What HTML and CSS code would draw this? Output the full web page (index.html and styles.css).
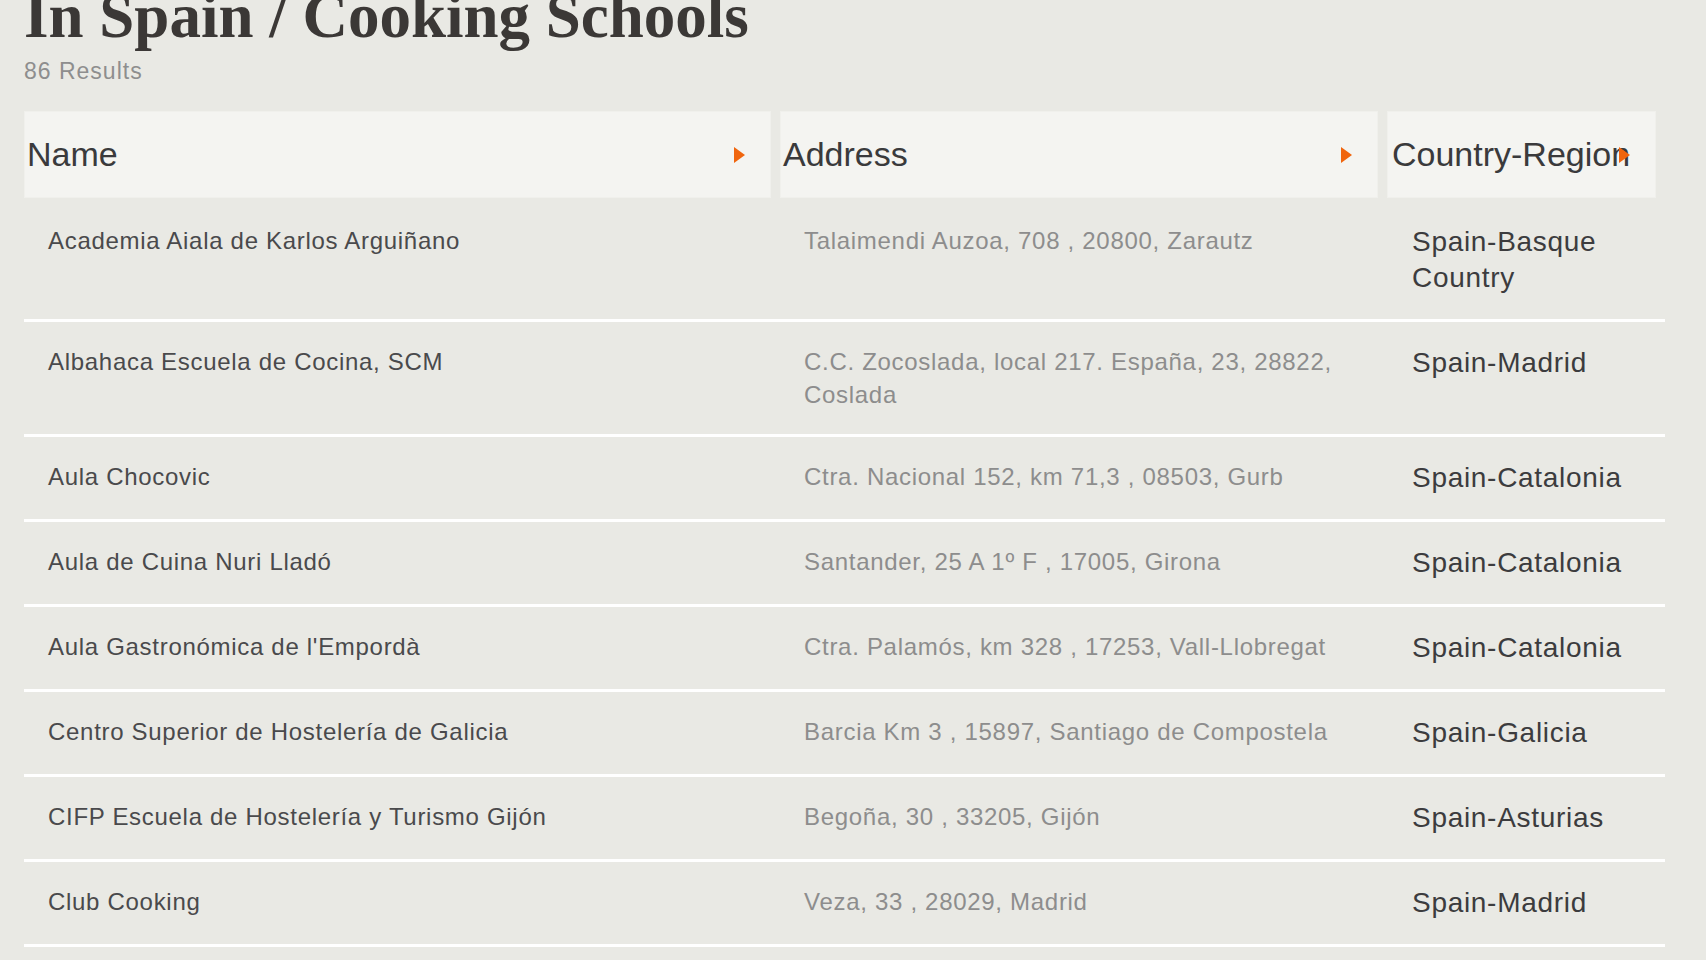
FILE: index.html
```html
<!DOCTYPE html>
<html lang="en">
<head>
<meta charset="utf-8">
<title>In Spain / Cooking Schools</title>
<link rel="stylesheet" href="styles.css">
</head>
<body>
<div class="page">
  <header class="page-head">
    <h1 class="title">In Spain / Cooking Schools</h1>
    <div class="count">86 Results</div>
  </header>
  <div class="list">
    <div class="row head-row">
      <div class="hcell">Name<span class="arrow"></span></div>
      <div class="hcell">Address<span class="arrow"></span></div>
      <div class="hcell">Country-Region<span class="arrow"></span></div>
    </div>
    <div class="row item">
      <div class="c-name">Academia Aiala de Karlos Arguiñano</div>
      <div class="c-addr">Talaimendi Auzoa, 708 , 20800, Zarautz</div>
      <div class="c-country">Spain-Basque Country</div>
    </div>
    <div class="row item">
      <div class="c-name">Albahaca Escuela de Cocina, SCM</div>
      <div class="c-addr">C.C. Zocoslada, local 217. España, 23, 28822, Coslada</div>
      <div class="c-country">Spain-Madrid</div>
    </div>
    <div class="row item">
      <div class="c-name">Aula Chocovic</div>
      <div class="c-addr">Ctra. Nacional 152, km 71,3 , 08503, Gurb</div>
      <div class="c-country">Spain-Catalonia</div>
    </div>
    <div class="row item">
      <div class="c-name">Aula de Cuina Nuri Lladó</div>
      <div class="c-addr">Santander, 25 A 1º F , 17005, Girona</div>
      <div class="c-country">Spain-Catalonia</div>
    </div>
    <div class="row item">
      <div class="c-name">Aula Gastronómica de l'Empordà</div>
      <div class="c-addr">Ctra. Palamós, km 328 , 17253, Vall-Llobregat</div>
      <div class="c-country">Spain-Catalonia</div>
    </div>
    <div class="row item">
      <div class="c-name">Centro Superior de Hostelería de Galicia</div>
      <div class="c-addr">Barcia Km 3 , 15897, Santiago de Compostela</div>
      <div class="c-country">Spain-Galicia</div>
    </div>
    <div class="row item">
      <div class="c-name">CIFP Escuela de Hostelería y Turismo Gijón</div>
      <div class="c-addr">Begoña, 30 , 33205, Gijón</div>
      <div class="c-country">Spain-Asturias</div>
    </div>
    <div class="row item">
      <div class="c-name">Club Cooking</div>
      <div class="c-addr">Veza, 33 , 28029, Madrid</div>
      <div class="c-country">Spain-Madrid</div>
    </div>
  </div>
</div>
</body>
</html>
```

FILE: styles.css
```css
html, body {
  margin: 0;
  padding: 0;
  background: #e9e9e4;
  overflow: hidden;
}

.page {
  padding-left: 24px;
  font-family: "Liberation Sans", Arial, sans-serif;
}

.page-head {
  margin-top: -15px;
}

.title {
  margin: 0;
  font-family: "Liberation Serif", "Times New Roman", serif;
  font-weight: bold;
  font-size: 63px;
  line-height: 62px;
  color: #3b3836;
  white-space: nowrap;
}

.count {
  margin-top: 11px;
  font-size: 23px;
  line-height: 26px;
  letter-spacing: 1px;
  color: #8e8e8e;
}

.list {
  margin-top: 27px;
  width: 1641px;
}

.row {
  display: grid;
  grid-template-columns: 747px 598px 269px;
  column-gap: 9px;
}

.head-row {
  margin-bottom: 3px;
}

.hcell {
  position: relative;
  height: 87px;
  display: flex;
  align-items: center;
  padding-left: 3px;
  background: #f4f4f1;
  box-shadow: inset 0 0 0 1px #f0f0ec;
  font-size: 34px;
  color: #3a3a3c;
  white-space: nowrap;
}

.hcell:last-child {
  padding-left: 5px;
}

.arrow {
  position: absolute;
  right: 26px;
  top: 36px;
  width: 0;
  height: 0;
  border-left: 11px solid #f0650e;
  border-top: 8px solid transparent;
  border-bottom: 8px solid transparent;
}

.item {
  padding: 23px 0;
  border-bottom: 3px solid #ffffff;
  align-items: start;
}

.c-name,
.c-addr {
  font-size: 24px;
  line-height: 33px;
  letter-spacing: 0.7px;
  padding-left: 24px;
  padding-right: 20px;
}

.c-name {
  color: #4a4a4c;
}

.c-addr {
  color: #8d8d8d;
}

.c-country {
  font-size: 28px;
  line-height: 36px;
  letter-spacing: 0.7px;
  padding-left: 25px;
  padding-right: 8px;
  color: #3c3c3e;
}
```
